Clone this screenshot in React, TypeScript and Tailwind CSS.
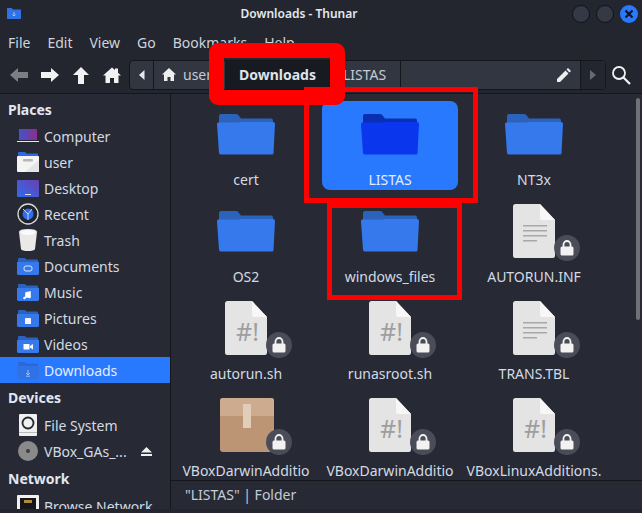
import React from "react";

const Folder = ({ back = "#2b62bc", front = "#3579ec" }: { back?: string; front?: string }) => (
  <svg width="58" height="41" viewBox="0 0 58 41">
    <path d="M2 8V2q0-2 2-2h15q2 0 3 2l2 2.500h30q2 0 2 2V12H2z" fill={back} />
    <path d="M1 8.500h21l2-0.500h32q2 0 2 2l-1.500 29q0 1.500-1.500 1.500H4q-1.500 0-2-1.500L0 10q0-1.500 1-1.500z" fill={front} />
  </svg>
);

const Lock = () => (
  <div className="absolute left-[41px] top-[31px] w-[26px] h-[26px] rounded-full bg-[#4a4d58] flex items-center justify-center">
    <svg width="14" height="16" viewBox="0 0 14 16">
      <path d="M3.500 7V4.500a3.500 3.500 0 0 1 7 0V7" fill="none" stroke="#f2f2f2" strokeWidth="1.800" />
      <rect x="0.500" y="6.500" width="13" height="9" rx="1.500" fill="#f2f2f2" />
    </svg>
  </div>
);

const Doc = ({ kind }: { kind: "text" | "script" }) => (
  <div className="relative w-[42px] h-[54px] mt-[-7px]">
    <svg width="42" height="54" viewBox="0 0 42 54">
      <path d="M2.500 0H27l15 16v35.500q0 2.500-2.500 2.500h-37Q0 54 0 51.500v-49Q0 0 2.500 0z" fill="#e4e4e4" />
      <path d="M27 0l15 16H29q-2 0-2-2z" fill="#f7f7f7" />
      {kind === "text" && (
        <g fill="#a8a8a8">
          <rect x="10" y="21" width="24" height="1.500" />
          <rect x="10" y="26" width="24" height="1.500" />
          <rect x="10" y="31" width="24" height="1.500" />
          <rect x="10" y="36" width="14" height="1.500" />
        </g>
      )}
    </svg>
    {kind === "script" && (
      <span className="absolute left-[11px] top-[16px] text-[25px] leading-[28px] font-normal text-[#9e9e9e]">
        #!
      </span>
    )}
    <Lock />
  </div>
);

const Package = () => (
  <div className="relative w-[42px] h-[54px] mt-[-7px]">
    <svg className="absolute left-[-5px]" width="54" height="54" viewBox="0 0 54 54">
      <rect x="0" y="0" width="54" height="54" rx="3" fill="#bc9574" />
      <path d="M0 3q0-3 3-3h48q3 0 3 3v15H0z" fill="#cdab8e" />
      <rect x="23" y="6" width="8" height="24" fill="#e2cdb9" />
    </svg>
    <Lock />
  </div>
);

const files = [
  { name: "cert", icon: "folder" },
  { name: "LISTAS", icon: "folder", selected: true },
  { name: "NT3x", icon: "folder" },
  { name: "OS2", icon: "folder" },
  { name: "windows_files", icon: "folder" },
  { name: "AUTORUN.INF", icon: "text" },
  { name: "autorun.sh", icon: "script" },
  { name: "runasroot.sh", icon: "script" },
  { name: "TRANS.TBL", icon: "text" },
  { name: "VBoxDarwinAdditio", icon: "package" },
  { name: "VBoxDarwinAdditio", icon: "script" },
  { name: "VBoxLinuxAdditions.", icon: "script" },
];

const Tile = ({ name, icon, selected }: { name: string; icon: string; selected?: boolean }) => (
  <div
    className={`w-[136px] h-[89px] rounded-[8px] flex flex-col items-center pt-[13px] ${
      selected ? "bg-[#2979ff] text-[#e4edff]" : ""
    }`}
  >
    <div className="h-[54px] flex items-start justify-center">
      {icon === "folder" && (selected ? <Folder back="#0a2fb0" front="#0a37ee" /> : <Folder />)}
      {icon === "text" && <Doc kind="text" />}
      {icon === "script" && <Doc kind="script" />}
      {icon === "package" && <Package />}
    </div>
    <div className="leading-[20px] mt-[3px] whitespace-nowrap">{name}</div>
  </div>
);

const FolderSmall = ({ glyph, dim }: { glyph?: React.ReactNode; dim?: boolean }) => (
  <svg width="22" height="17" viewBox="0 0 22 17" className="mx-auto">
    <path d="M1 3V1q0-1 1-1h6l1.500 1.500H20q1 0 1 1V5H1z" fill={dim ? "#2a68d8" : "#2b62bc"} />
    <path d="M0 4h22v11.500q0 1.500-1.500 1.500h-19Q0 17 0 15.500z" fill={dim ? "#2f72e6" : "#3579ec"} />
    {glyph}
  </svg>
);

const places: { name: string; icon: React.ReactNode; active?: boolean }[] = [
  {
    name: "Computer",
    icon: (
      <svg width="22" height="14" viewBox="0 0 22 14" className="mx-auto">
        <defs>
          <linearGradient id="cmp" x1="0" x2="1">
            <stop offset="0" stopColor="#4254c8" />
            <stop offset="1" stopColor="#8a2f8c" />
          </linearGradient>
        </defs>
        <rect x="2" y="0" width="18" height="11" fill="url(#cmp)" />
        <rect x="0" y="12" width="22" height="1" fill="#e8e8e8" />
      </svg>
    ),
  },
  {
    name: "user",
    icon: (
      <svg width="22" height="20" viewBox="0 0 22 20" className="mx-auto">
        <path d="M1 4V1q0-1 1-1h6l1.500 1.500H21V5H1z" fill="#2b6ae0" />
        <rect x="0" y="4" width="22" height="16" rx="1" fill="#f4f4f4" />
        <path d="M22 8v12H8z" fill="#e4e4e4" />
        <rect x="6" y="7" width="10" height="2.500" rx="1" fill="#b5b5b5" />
      </svg>
    ),
  },
  {
    name: "Desktop",
    icon: (
      <svg width="22" height="17" viewBox="0 0 22 17" className="mx-auto">
        <defs>
          <linearGradient id="dsk" x1="0" y1="1" x2="1" y2="0">
            <stop offset="0" stopColor="#2f6cf0" />
            <stop offset="1" stopColor="#6a3fae" />
          </linearGradient>
        </defs>
        <rect width="22" height="17" rx="1" fill="url(#dsk)" />
        <rect x="8" y="14" width="6" height="1" fill="#ddd" />
      </svg>
    ),
  },
  {
    name: "Recent",
    icon: (
      <svg width="22" height="22" viewBox="0 0 22 22" className="mx-auto">
        <circle cx="11" cy="11" r="10" fill="#20232c" stroke="#d8d8d8" strokeWidth="1.300" />
        <circle cx="11" cy="11" r="5.500" fill="#2f6cf0" />
        <path d="M11 11L6 6M11 11l4-5M11 11v6" stroke="#c9d6f5" strokeWidth="1" />
      </svg>
    ),
  },
  {
    name: "Trash",
    icon: (
      <svg width="18" height="22" viewBox="0 0 18 22" className="mx-auto">
        <path d="M0 3q0-3 9-3t9 3l-2 17q-1 2-7 2t-7-2z" fill="#e9e9e9" />
        <ellipse cx="9" cy="3.500" rx="7" ry="2.500" fill="#fafafa" />
      </svg>
    ),
  },
  {
    name: "Documents",
    icon: <FolderSmall glyph={<rect x="7" y="8" width="8" height="5" rx="2" fill="none" stroke="#dbe6ff" strokeWidth="1" />} />,
  },
  {
    name: "Music",
    icon: (
      <FolderSmall
        glyph={<path d="M8.500 14V8.500l5-1V13M8.500 14a1 1 0 1 1-2 0 1 1 0 0 1 2 0zM13.500 13a1 1 0 1 1-2 0 1 1 0 0 1 2 0z" fill="#fff" stroke="#fff" strokeWidth="0.600" />}
      />
    ),
  },
  {
    name: "Pictures",
    icon: <FolderSmall glyph={<rect x="8" y="8" width="6" height="6" rx="0.500" fill="#f2f5ff" />} />,
  },
  {
    name: "Videos",
    icon: <FolderSmall glyph={<path d="M6.500 8h6v5.500h-6zM13 10l3-2v5.500l-3-2z" fill="#fff" />} />,
  },
  {
    name: "Downloads",
    active: true,
    icon: <FolderSmall dim glyph={<path d="M11 8v4.500M9 11l2 2 2-2M9 14.200h4" stroke="#a9c6fa" strokeWidth="0.900" fill="none" />} />,
  },
];

const Row = ({ name, icon, active, children }: { name: string; icon: React.ReactNode; active?: boolean; children?: React.ReactNode }) => (
  <div className={`h-[26px] flex items-center pl-[17px] shrink-0 ${active ? "bg-[#2979ff] text-[#e4edff]" : ""}`}>
    <div className="w-[22px] shrink-0 flex justify-center">{icon}</div>
    <span className="ml-[5px] whitespace-nowrap">{name}</span>
    {children}
  </div>
);

const ToolIcon = ({ d, fill = "#f2f2f2" }: { d: string; fill?: string }) => (
  <svg width="20" height="20" viewBox="0 0 20 20" className="shrink-0">
    <path d={d} fill={fill} />
  </svg>
);

export default function App() {
  return (
    <div className="relative w-[642px] h-[513px] overflow-hidden bg-[#23262f] text-[#d3dae3] text-[14px] font-['Noto_Sans',sans-serif]">
      {/* title bar */}
      <div className="relative h-[28px] flex items-center justify-center pr-[44px] font-semibold text-[12px] text-[#e6e8ec]">
        <svg className="absolute left-[7px] top-[8px]" width="14" height="11" viewBox="0 0 14 11">
          <path d="M0 2V.500Q0 0 .500 0h4L6 1.500h7.500q.500 0 .500.500v8.500q0 .500-.500.500H.500Q0 11 0 10.500z" fill="#2f72e6" />
          <path d="M7 4v3.500M5.500 6.500L7 8l1.500-1.500" stroke="#bcd4ff" strokeWidth="0.800" fill="none" />
        </svg>
        <span>Downloads - Thunar</span>
        <div className="absolute right-[4px] top-[5px] flex gap-[6px]">
          <div className="w-[18px] h-[18px] rounded-full bg-[#353945] border border-[#111319]" />
          <div className="w-[18px] h-[18px] rounded-full bg-[#353945] border border-[#111319]" />
          <div className="w-[18px] h-[18px] rounded-full bg-[#2979ff] flex items-center justify-center">
            <svg width="10" height="10" viewBox="0 0 10 10">
              <path d="M1.500 1.500l7 7M8.500 1.500l-7 7" stroke="#12151c" strokeWidth="2.200" />
            </svg>
          </div>
        </div>
      </div>

      {/* menu */}
      <div className="h-[28px] flex items-center gap-[17px] pl-[8px] text-[#cfd4dc]">
        {["File", "Edit", "View", "Go", "Bookmarks", "Help"].map((m) => (
          <span key={m}>{m}</span>
        ))}
      </div>

      {/* toolbar */}
      <div className="h-[38px] flex items-center pl-[9px] border-b border-[#14161c]">
        <div className="flex gap-[11px] w-[120px]">
          <ToolIcon fill="#7b7e85" d="M1 10l8-7v4h10v6H9v4z" />
          <ToolIcon d="M19 10l-8-7v4H1v6h10v4z" />
          <ToolIcon d="M10 2l8 8h-5v9H7v-9H2z" />
          <ToolIcon d="M10 2.500l3 2.600V3.500h3v4.200l3 2.800h-2.500V18H12v-5H8v5H3.500v-7.500H1z" />
        </div>
        <div className="h-[30px] w-[477px] flex rounded-[4px] border border-[#14161c] bg-[#323640] text-[#c6cbd4]">
          <div className="w-[24px] flex items-center justify-center border-r border-[#14161c]">
            <svg width="6" height="10" viewBox="0 0 6 10">
              <path d="M5.500 0v10L0 5z" fill="#e8e8e8" />
            </svg>
          </div>
          <div className="w-[71px] flex items-center pl-[8px] gap-[7px]">
            <svg width="14" height="13" viewBox="0 0 14 13">
              <path d="M7 0l7 6.500h-2V13H8.500V9h-3v4H2V6.500H0z" fill="#eeeeee" />
            </svg>
            <span>user</span>
          </div>
          <div className="w-[105px] flex items-center justify-center bg-[#181a21] font-bold text-[#dfe3ea]">Downloads</div>
          <div className="w-[71px] flex items-center pl-[13px] border-r border-[#14161c]">LISTAS</div>
          <div className="flex-1 flex items-center justify-end pr-[9px] border-r border-[#14161c]">
            <svg width="14" height="14" viewBox="0 0 14 14">
              <path d="M0 14v-3L8.500 2.500l3 3L3 14zM9.500 1.500L11 0l3 3-1.500 1.500z" fill="#eeeeee" />
            </svg>
          </div>
          <div className="w-[24px] flex items-center justify-center bg-[#23262f] rounded-r-[4px]">
            <svg width="6" height="10" viewBox="0 0 6 10">
              <path d="M0 0v10l6-5z" fill="#666a73" />
            </svg>
          </div>
        </div>
        <svg className="ml-[5px]" width="20" height="20" viewBox="0 0 20 20">
          <circle cx="8" cy="8" r="6" fill="none" stroke="#f2f2f2" strokeWidth="1.800" />
          <path d="M12.500 12.500L19 19" stroke="#f2f2f2" strokeWidth="2.200" />
        </svg>
      </div>

      {/* body */}
      <div className="h-[415px] flex">
        <div className="w-[170px] h-full overflow-hidden bg-[#272a35] flex flex-col pt-[1px]">
          <div className="h-[28px] flex items-center pl-[8px] font-bold text-[#e2e6ee] shrink-0">Places</div>
          {places.map((p) => (
            <Row key={p.name} name={p.name} icon={p.icon} active={p.active} />
          ))}
          <div className="h-[29px] flex items-center pl-[8px] font-bold text-[#e2e6ee] shrink-0">Devices</div>
          <Row
            name="File System"
            icon={
              <svg width="18" height="22" viewBox="0 0 18 22" className="mx-auto">
                <rect width="18" height="22" rx="1" fill="#f0f0f0" />
                <circle cx="9" cy="9" r="5.500" fill="none" stroke="#25272e" strokeWidth="1.800" />
                <rect x="0" y="18" width="18" height="1" fill="#b8b8b8" />
              </svg>
            }
          />
          <Row
            name="VBox_GAs_..."
            icon={
              <svg width="20" height="20" viewBox="0 0 20 20" className="mx-auto">
                <circle cx="10" cy="10" r="10" fill="#8a8a8a" />
                <circle cx="10" cy="10" r="2" fill="#3b3b3b" />
              </svg>
            }
          >
            <svg className="ml-[14px]" width="11" height="9" viewBox="0 0 11 9">
              <path d="M5.500 0L11 5.500H0zM0 7h11v2H0z" fill="#f0f0f0" />
            </svg>
          </Row>
          <div className="h-[29px] flex items-center pl-[8px] font-bold text-[#e2e6ee] shrink-0">Network</div>
          <Row
            name="Browse Network"
            icon={
              <svg width="22" height="22" viewBox="0 0 22 22" className="mx-auto">
                <rect width="22" height="22" rx="1" fill="#f0f0f0" />
                <rect x="3" y="3" width="16" height="16" fill="#14161c" />
                <rect x="7" y="5" width="8" height="3" fill="#b08b3a" />
              </svg>
            }
          />
        </div>
        <div className="w-[1px] bg-[#14161c]" />
        <div className="flex-1 min-w-0 flex flex-col bg-[#272a35]">
          <div className="relative h-[387px] overflow-hidden border-b border-[#14161c]">
            <div className="grid grid-cols-[repeat(3,136px)] auto-rows-[89px] gap-[8px] pl-[7px] pt-[7px] text-[#d3dae3]">
              {files.map((f, i) => (
                <Tile key={i} name={f.name} icon={f.icon} selected={f.selected} />
              ))}
            </div>
            <div className="absolute right-[2px] top-[4px] w-[4px] h-[222px] rounded-full bg-[#6f7279]" />
          </div>
          <div className="h-[27px] flex items-center pl-[14px] text-[#c6cbd4]">"LISTAS" | Folder</div>
        </div>
      </div>

      {/* red annotations drawn over the screenshot */}
      <div className="absolute left-[209px] top-[43px] w-[136px] h-[62px] rounded-[9px] border-[15px] border-[#ff0000]" />
      <div className="absolute left-[304px] top-[87px] w-[174px] h-[116px] border-[5px] border-[#ff0000]" />
      <div className="absolute left-[327px] top-[203px] w-[135px] h-[97px] border-[5px] border-[#ff0000]" />
    </div>
  );
}
